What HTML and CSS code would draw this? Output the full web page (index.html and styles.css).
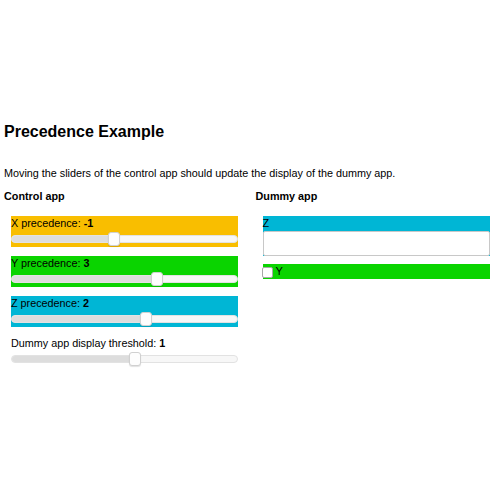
FILE: index.html
```html
<!DOCTYPE html>
<html>
<head>
<meta charset="utf-8">
<link rel="stylesheet" href="styles.css">
</head>
<body>
<div class="page">
  <h1 class="title">Precedence Example</h1>
  <p class="intro">Moving the sliders of the control app should update the display of the dummy app.</p>
  <div class="columns">
    <section class="col">
      <h2 class="col-title">Control app</h2>
      <div class="panel orange">
        <div class="label">X precedence: <b>-1</b></div>
        <div class="slider"><div class="track"><div class="fill" style="width:45%"></div></div><div class="thumb" style="left:calc((100% - 12px) * 0.45)"></div></div>
      </div>
      <div class="panel green">
        <div class="label">Y precedence: <b>3</b></div>
        <div class="slider"><div class="track"><div class="fill" style="width:65%"></div></div><div class="thumb" style="left:calc((100% - 12px) * 0.65)"></div></div>
      </div>
      <div class="panel blue">
        <div class="label">Z precedence: <b>2</b></div>
        <div class="slider"><div class="track"><div class="fill" style="width:60%"></div></div><div class="thumb" style="left:calc((100% - 12px) * 0.60)"></div></div>
      </div>
      <div class="panel plain">
        <div class="label">Dummy app display threshold: <b>1</b></div>
        <div class="slider"><div class="track"><div class="fill" style="width:55%"></div></div><div class="thumb" style="left:calc((100% - 12px) * 0.55)"></div></div>
      </div>
    </section>
    <section class="col">
      <h2 class="col-title">Dummy app</h2>
      <div class="dummy blue">
        <div class="label">Z</div>
        <div class="field"></div>
      </div>
      <div class="dummy green check-row">
        <span class="checkbox"></span><span class="check-label">Y</span>
      </div>
    </section>
  </div>
</div>
</body>
</html>
```
FILE: styles.css
```css
html, body {
  margin: 0;
  padding: 0;
  background: #fff;
}
body {
  font-family: "Liberation Sans", Arial, sans-serif;
  color: #000;
  font-size: 10.8px;
  line-height: 15px;
}
.page {
  padding: 122px 4px 0 4px;
}
.title {
  margin: 0;
  font-size: 16px;
  line-height: 19px;
  font-weight: bold;
}
.intro {
  margin: 25px 0 0 0;
}
.columns {
  display: grid;
  grid-template-columns: 1fr 1fr;
  column-gap: 11px;
  margin-top: 8px;
}
.col-title {
  margin: 0 0 12px 0;
  font-size: 10.8px;
  line-height: 15px;
  font-weight: bold;
}
.panel, .dummy {
  margin-left: 7px;
  width: 227px;
  margin-bottom: 9px;
}
.dummy { margin-left: 7px; margin-bottom: 8px; }
.orange { background: #f9be00; }
.green { background: #0ad400; }
.blue { background: #00b6d5; }
.label b { font-weight: bold; }
.slider {
  position: relative;
  height: 16px;
}
.track {
  position: absolute;
  left: 0;
  right: 0;
  top: 4px;
  height: 8px;
  box-sizing: border-box;
  border-radius: 4px;
  background: #f7f7f7;
  border: 1px solid #e2e2e2;
  overflow: hidden;
}
.fill {
  height: 100%;
  background: #dddddd;
}
.thumb {
  position: absolute;
  top: 1px;
  width: 12px;
  height: 14px;
  box-sizing: border-box;
  background: #fdfdfd;
  border: 1px solid #d0d0d0;
  border-radius: 3px;
  box-shadow: 0 1px 1px rgba(0,0,0,0.12);
}
.field {
  height: 25px;
  box-sizing: border-box;
  background: #fff;
  border: 1px solid #c8c8c8;
  border-radius: 2px;
}
.check-row {
  display: flex;
  align-items: center;
  height: 15px;
}
.checkbox {
  width: 11px;
  height: 11px;
  box-sizing: border-box;
  background: #fff;
  border: 1px solid #a8a8a8;
  border-radius: 2px;
  margin: 2px 3px 0 -1px;
}
.check-label {
  font-size: 11px;
}
```
